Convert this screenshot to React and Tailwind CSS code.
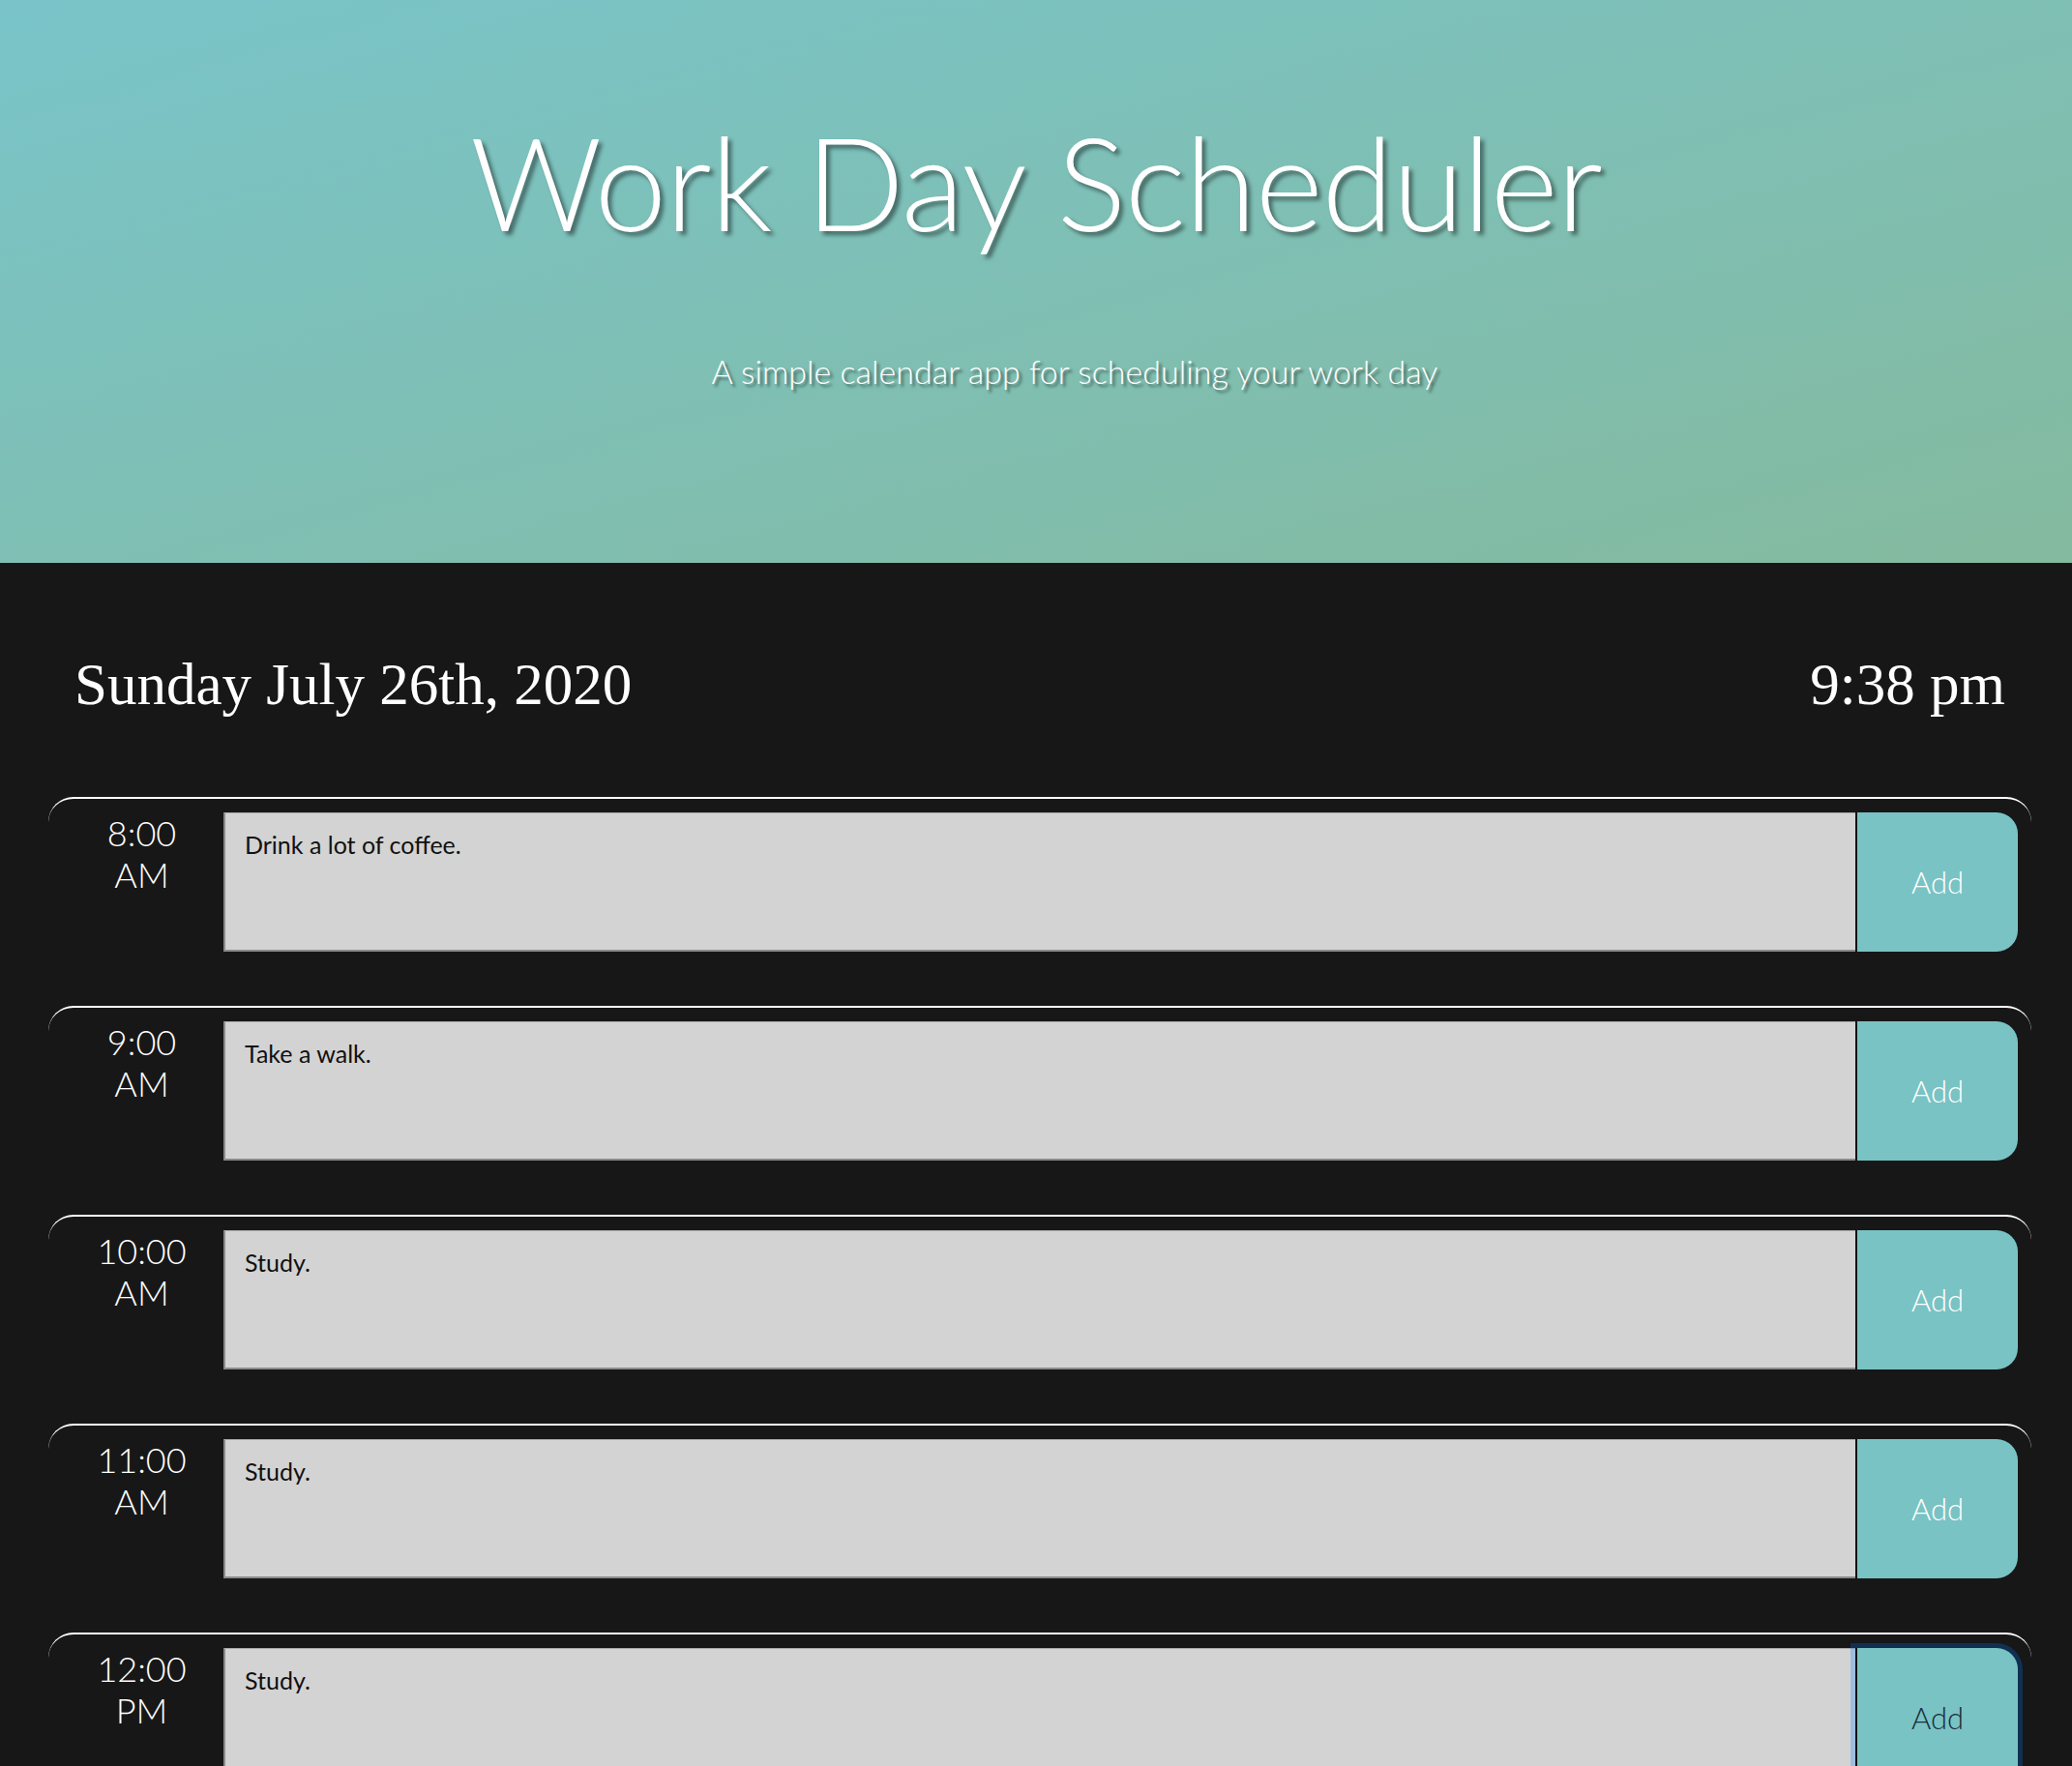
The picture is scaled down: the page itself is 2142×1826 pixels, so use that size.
import React from "react";

const rows = [
  { h: "8:00", p: "AM", t: "Drink a lot of coffee." },
  { h: "9:00", p: "AM", t: "Take a walk." },
  { h: "10:00", p: "AM", t: "Study." },
  { h: "11:00", p: "AM", t: "Study." },
  { h: "12:00", p: "PM", t: "Study.", focus: true },
  { h: "1:00", p: "PM", t: "" },
  { h: "2:00", p: "PM", t: "" },
  { h: "3:00", p: "PM", t: "" },
  { h: "4:00", p: "PM", t: "" },
  { h: "5:00", p: "PM", t: "" },
];

function Row({ r }) {
  return (
    <div className="flex rounded-[26px] border-t-2 border-white pt-[14px] pr-[14px] mb-[56px]">
      <div className="w-[181px] shrink-0 pl-[12px] text-center text-white text-[36px] leading-[43px] font-light font-['Lato',sans-serif]">
        <div>{r.h}</div>
        <div>{r.p}</div>
      </div>
      <textarea
        defaultValue={r.t}
        className="h-[144px] flex-1 resize-none bg-[#d3d3d3] border-l-2 border-b-2 border-t border-r-0 border-l-[#8a8a8a] border-b-[#8a8a8a] border-t-[#a9a9a9] pl-5 pt-[14px] text-[25px] leading-[37px] text-[#111] font-['Lato',sans-serif] outline-none"
      />
      <button
        className={
          "h-[144px] w-[168px] shrink-0 rounded-r-[22px] bg-[#79c3c4] border-l-2 border-[#111] text-[31px] font-light font-['Lato',sans-serif] " +
          (r.focus
            ? "text-[#1b2d3a] shadow-[0_0_0_5px_rgba(0,123,255,0.25)]"
            : "text-white")
        }
      >
        Add
      </button>
    </div>
  );
}

export default function App() {
  return (
    <div className="min-h-screen bg-[#171717]">
      <header className="h-[582px] bg-gradient-to-br from-[#79c4c9] to-[#84ba9f] flex flex-col items-center pt-[121px]">
        <h1 className="text-[134px] leading-none font-light text-white font-['Lato',sans-serif] [text-shadow:4px_4px_4px_rgba(0,0,0,0.45)] tracking-[-1px]">
          Work Day Scheduler
        </h1>
        <p className="mt-[112px] pl-[80px] text-[34px] leading-none font-light text-white font-['Lato',sans-serif] [text-shadow:3px_3px_3px_rgba(0,0,0,0.5)]">
          A simple calendar app for scheduling your work day
        </p>
      </header>
      <main className="pl-[50px] pr-[42px]">
        <div className="flex justify-between px-[27px] pt-[90px] pb-[80px] text-white text-[61px] leading-[72px] font-['Liberation_Serif',serif]">
          <span>Sunday July 26th, 2020</span>
          <span>9:38 pm</span>
        </div>
        {rows.map((r, i) => (
          <Row key={i} r={r} />
        ))}
      </main>
    </div>
  );
}
